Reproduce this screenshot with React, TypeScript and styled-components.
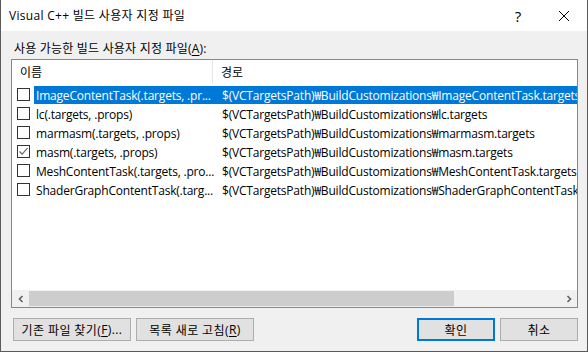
import React from 'react';
import styled, { createGlobalStyle } from 'styled-components';

const GlobalStyle = createGlobalStyle`
  html, body {
    margin: 0;
    padding: 0;
    background: #f0f0f0;
  }
  body {
    font-family: "Open Sans", "Noto Sans CJK KR", sans-serif;
    font-size: 12px;
    color: #000;
  }
`;

const FONT = `"Open Sans", "Noto Sans CJK KR", sans-serif`;

const Window = styled.div`
  width: 588px;
  height: 352px;
  box-sizing: border-box;
  display: flex;
  flex-direction: column;
  background: #f0f0f0;
  border: 1px solid #5a5a5a;
  border-top: none;
  font-family: ${FONT};
  font-size: 12px;
`;

const TitleBar = styled.div`
  height: 31px;
  flex-shrink: 0;
  background: #fff;
  display: flex;
  align-items: center;
  padding-left: 8px;
`;

const Title = styled.div`
  flex: 1;
  font-size: 12px;
  line-height: 16px;
  letter-spacing: 0.3px;
`;

const TitleButton = styled.div<{ $w: number }>`
  width: ${p => p.$w}px;
  height: 31px;
  display: flex;
  align-items: center;
  justify-content: center;
  font-size: 15px;
`;

const Body = styled.div`
  flex: 1;
  display: flex;
  flex-direction: column;
  padding: 8px 9px 0 10px;
`;

const Label = styled.div`
  height: 20px;
  line-height: 20px;
  padding-left: 3px;
  letter-spacing: 0.2px;
`;

const U = styled.span`
  text-decoration: underline;
  text-underline-offset: 2px;
`;

const ListBox = styled.div`
  height: 249px;
  box-sizing: border-box;
  border: 1px solid #828790;
  background: #fff;
  display: flex;
  flex-direction: column;
  overflow: hidden;
`;

const Header = styled.div`
  height: 25px;
  flex-shrink: 0;
  display: flex;
`;

const HeaderCell = styled.div<{ $w?: number }>`
  ${p => (p.$w ? `width: ${p.$w}px;` : 'flex: 1;')}
  height: 23px;
  box-sizing: border-box;
  display: flex;
  align-items: center;
  padding-left: 8px;
  border-right: ${p => (p.$w ? '1px solid #e5e5e5' : 'none')};
`;

const Rows = styled.div`
  flex: 1;
  display: flex;
  flex-direction: column;
`;

const Row = styled.div`
  height: 19px;
  flex-shrink: 0;
  display: flex;
  align-items: flex-start;
  padding-left: 5px;
`;

const Box = styled.div`
  width: 13px;
  height: 13px;
  box-sizing: border-box;
  border: 1px solid #333;
  background: #fff;
  margin-top: 3px;
  flex-shrink: 0;
  display: flex;
  align-items: center;
  justify-content: center;
`;

const Item = styled.div<{ $sel: boolean }>`
  flex: 1;
  height: 18px;
  margin-top: 1px;
  margin-left: 4px;
  display: flex;
  align-items: center;
  white-space: nowrap;
  overflow: hidden;
  letter-spacing: -0.2px;
  background: ${p => (p.$sel ? '#0078d7' : 'transparent')};
  color: ${p => (p.$sel ? '#fff' : '#000')};
`;

const NameCell = styled.div`
  width: 179px;
  padding-left: 2px;
  overflow: hidden;
  flex-shrink: 0;
`;

const PathCell = styled.div`
  flex: 1;
  padding-left: 7px;
  overflow: hidden;
`;

const ScrollBar = styled.div`
  height: 17px;
  flex-shrink: 0;
  display: flex;
  background: #f0f0f0;
`;

const Arrow = styled.div`
  width: 17px;
  height: 17px;
  display: flex;
  align-items: center;
  justify-content: center;
`;

const Track = styled.div`
  flex: 1;
  display: flex;
  padding: 1px 0;
`;

const Thumb = styled.div`
  background: #cdcdcd;
  height: 15px;
`;

const ButtonRow = styled.div`
  display: flex;
  margin-top: 10px;
  padding-left: 2px;
  gap: 5px;
`;

const Spacer = styled.div`
  flex: 1;
`;

const Button = styled.div<{ $w: number; $default?: boolean }>`
  width: ${p => p.$w}px;
  height: 23px;
  box-sizing: border-box;
  background: #e1e1e1;
  border: ${p => (p.$default ? '2px solid #0078d7' : '1px solid #adadad')};
  display: flex;
  align-items: center;
  justify-content: center;
  white-space: nowrap;
  letter-spacing: 0.4px;
`;

const items = [
  { name: 'ImageContentTask(.targets, .pr...', file: 'ImageContentTask.targets', checked: false, sel: true },
  { name: 'lc(.targets, .props)', file: 'lc.targets', checked: false, sel: false },
  { name: 'marmasm(.targets, .props)', file: 'marmasm.targets', checked: false, sel: false },
  { name: 'masm(.targets, .props)', file: 'masm.targets', checked: true, sel: false },
  { name: 'MeshContentTask(.targets, .pro...', file: 'MeshContentTask.targets', checked: false, sel: false },
  { name: 'ShaderGraphContentTask(.targ...', file: 'ShaderGraphContentTask.targets', checked: false, sel: false },
];

const Check = () => (
  <svg width="11" height="11" viewBox="0 0 11 11">
    <path d="M1.5 5.5 L4.2 8.2 L9.5 2" fill="none" stroke="#5f5f5f" strokeWidth="1.1" />
  </svg>
);

export default function App() {
  return (
    <>
      <GlobalStyle />
      <Window>
        <TitleBar>
          <Title>Visual C++ 빌드 사용자 지정 파일</Title>
          <TitleButton $w={46}>?</TitleButton>
          <TitleButton $w={46}>
            <svg width="12" height="12" viewBox="0 0 12 12">
              <path d="M1 1 L11 11 M11 1 L1 11" stroke="#000" strokeWidth="1" />
            </svg>
          </TitleButton>
        </TitleBar>
        <Body>
          <Label>
            사용 가능한 빌드 사용자 지정 파일(<U>A</U>):
          </Label>
          <ListBox>
            <Header>
              <HeaderCell $w={201}>이름</HeaderCell>
              <HeaderCell>경로</HeaderCell>
            </Header>
            <Rows>
              {items.map(it => (
                <Row key={it.name}>
                  <Box>{it.checked && <Check />}</Box>
                  <Item $sel={it.sel}>
                    <NameCell>{it.name}</NameCell>
                    <PathCell>$(VCTargetsPath)₩BuildCustomizations₩{it.file}</PathCell>
                  </Item>
                </Row>
              ))}
            </Rows>
            <ScrollBar>
              <Arrow>
                <svg width="8" height="8" viewBox="0 0 8 8">
                  <path d="M5.5 1 L2.5 4 L5.5 7" fill="none" stroke="#606060" strokeWidth="1.6" />
                </svg>
              </Arrow>
              <Track>
                <Thumb style={{ width: 425 }} />
              </Track>
              <Arrow>
                <svg width="8" height="8" viewBox="0 0 8 8">
                  <path d="M2.5 1 L5.5 4 L2.5 7" fill="none" stroke="#606060" strokeWidth="1.6" />
                </svg>
              </Arrow>
            </ScrollBar>
          </ListBox>
          <ButtonRow>
            <Button $w={118}>
              기존 파일 찾기(<U>F</U>)...
            </Button>
            <Button $w={118}>
              목록 새로 고침(<U>R</U>)
            </Button>
            <Spacer />
            <Button $w={78} $default>
              확인
            </Button>
            <Button $w={78}>취소</Button>
          </ButtonRow>
        </Body>
      </Window>
    </>
  );
}
